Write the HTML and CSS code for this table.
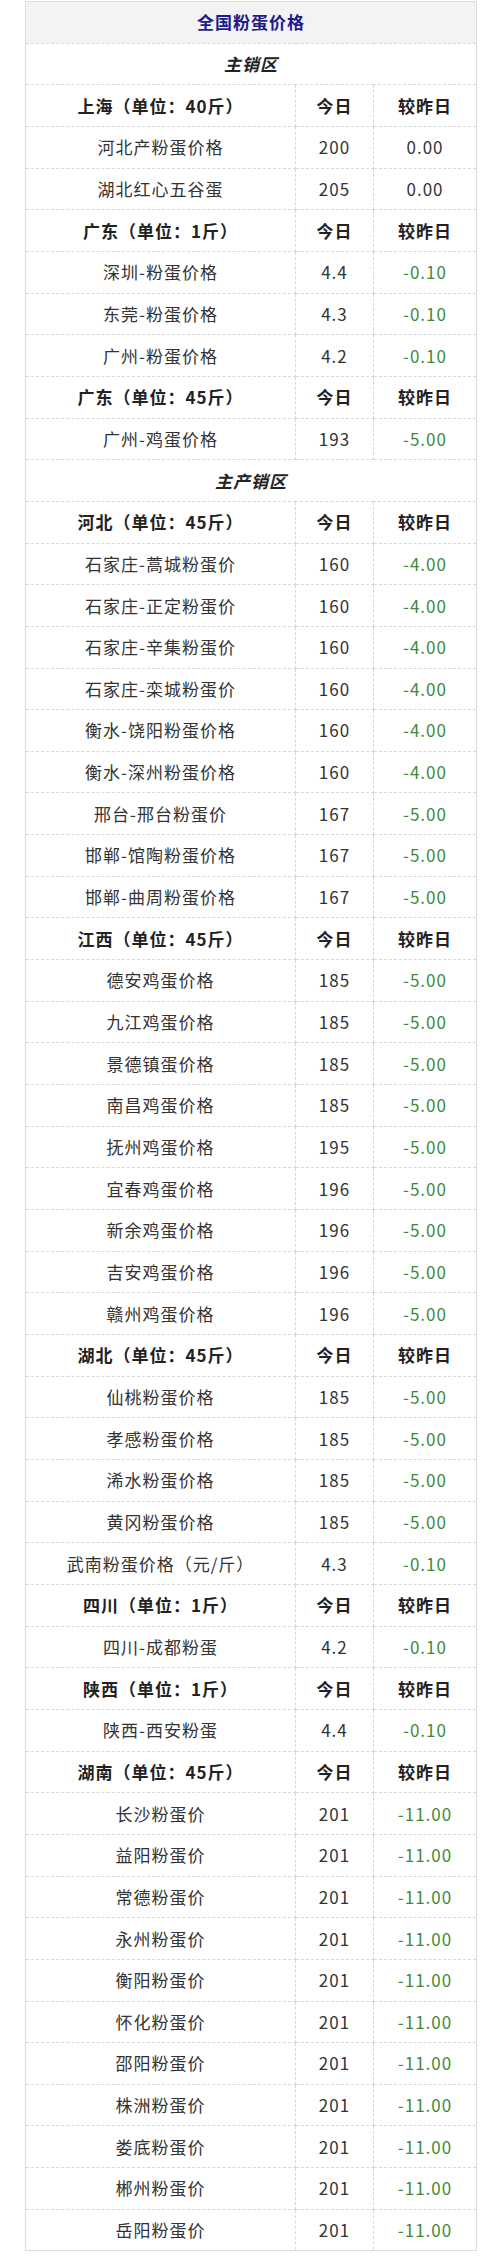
FILE: index.html
```html
<!DOCTYPE html>
<html lang="zh-CN">
<head>
<meta charset="utf-8">
<title>全国粉蛋价格</title>
<link rel="stylesheet" href="styles.css">
</head>
<body>
<table class="price-table">
  <colgroup>
    <col class="c-name">
    <col class="c-today">
    <col class="c-diff">
  </colgroup>
  <tbody>
    <tr class="title"><td colspan="3">全国粉蛋价格</td></tr>
    <tr class="zone"><td colspan="3">主销区</td></tr>
    <tr class="head"><td>上海（单位：40斤）</td><td>今日</td><td>较昨日</td></tr>
    <tr><td>河北产粉蛋价格</td><td>200</td><td>0.00</td></tr>
    <tr><td>湖北红心五谷蛋</td><td>205</td><td>0.00</td></tr>
    <tr class="head"><td>广东（单位：1斤）</td><td>今日</td><td>较昨日</td></tr>
    <tr><td>深圳-粉蛋价格</td><td>4.4</td><td class="down">-0.10</td></tr>
    <tr><td>东莞-粉蛋价格</td><td>4.3</td><td class="down">-0.10</td></tr>
    <tr><td>广州-粉蛋价格</td><td>4.2</td><td class="down">-0.10</td></tr>
    <tr class="head"><td>广东（单位：45斤）</td><td>今日</td><td>较昨日</td></tr>
    <tr><td>广州-鸡蛋价格</td><td>193</td><td class="down">-5.00</td></tr>
    <tr class="zone"><td colspan="3">主产销区</td></tr>
    <tr class="head"><td>河北（单位：45斤）</td><td>今日</td><td>较昨日</td></tr>
    <tr><td>石家庄-蒿城粉蛋价</td><td>160</td><td class="down">-4.00</td></tr>
    <tr><td>石家庄-正定粉蛋价</td><td>160</td><td class="down">-4.00</td></tr>
    <tr><td>石家庄-辛集粉蛋价</td><td>160</td><td class="down">-4.00</td></tr>
    <tr><td>石家庄-栾城粉蛋价</td><td>160</td><td class="down">-4.00</td></tr>
    <tr><td>衡水-饶阳粉蛋价格</td><td>160</td><td class="down">-4.00</td></tr>
    <tr><td>衡水-深州粉蛋价格</td><td>160</td><td class="down">-4.00</td></tr>
    <tr><td>邢台-邢台粉蛋价</td><td>167</td><td class="down">-5.00</td></tr>
    <tr><td>邯郸-馆陶粉蛋价格</td><td>167</td><td class="down">-5.00</td></tr>
    <tr><td>邯郸-曲周粉蛋价格</td><td>167</td><td class="down">-5.00</td></tr>
    <tr class="head"><td>江西（单位：45斤）</td><td>今日</td><td>较昨日</td></tr>
    <tr><td>德安鸡蛋价格</td><td>185</td><td class="down">-5.00</td></tr>
    <tr><td>九江鸡蛋价格</td><td>185</td><td class="down">-5.00</td></tr>
    <tr><td>景德镇蛋价格</td><td>185</td><td class="down">-5.00</td></tr>
    <tr><td>南昌鸡蛋价格</td><td>185</td><td class="down">-5.00</td></tr>
    <tr><td>抚州鸡蛋价格</td><td>195</td><td class="down">-5.00</td></tr>
    <tr><td>宜春鸡蛋价格</td><td>196</td><td class="down">-5.00</td></tr>
    <tr><td>新余鸡蛋价格</td><td>196</td><td class="down">-5.00</td></tr>
    <tr><td>吉安鸡蛋价格</td><td>196</td><td class="down">-5.00</td></tr>
    <tr><td>赣州鸡蛋价格</td><td>196</td><td class="down">-5.00</td></tr>
    <tr class="head"><td>湖北（单位：45斤）</td><td>今日</td><td>较昨日</td></tr>
    <tr><td>仙桃粉蛋价格</td><td>185</td><td class="down">-5.00</td></tr>
    <tr><td>孝感粉蛋价格</td><td>185</td><td class="down">-5.00</td></tr>
    <tr><td>浠水粉蛋价格</td><td>185</td><td class="down">-5.00</td></tr>
    <tr><td>黄冈粉蛋价格</td><td>185</td><td class="down">-5.00</td></tr>
    <tr><td>武南粉蛋价格（元/斤）</td><td>4.3</td><td class="down">-0.10</td></tr>
    <tr class="head"><td>四川（单位：1斤）</td><td>今日</td><td>较昨日</td></tr>
    <tr><td>四川-成都粉蛋</td><td>4.2</td><td class="down">-0.10</td></tr>
    <tr class="head"><td>陕西（单位：1斤）</td><td>今日</td><td>较昨日</td></tr>
    <tr><td>陕西-西安粉蛋</td><td>4.4</td><td class="down">-0.10</td></tr>
    <tr class="head"><td>湖南（单位：45斤）</td><td>今日</td><td>较昨日</td></tr>
    <tr><td>长沙粉蛋价</td><td>201</td><td class="down">-11.00</td></tr>
    <tr><td>益阳粉蛋价</td><td>201</td><td class="down">-11.00</td></tr>
    <tr><td>常德粉蛋价</td><td>201</td><td class="down">-11.00</td></tr>
    <tr><td>永州粉蛋价</td><td>201</td><td class="down">-11.00</td></tr>
    <tr><td>衡阳粉蛋价</td><td>201</td><td class="down">-11.00</td></tr>
    <tr><td>怀化粉蛋价</td><td>201</td><td class="down">-11.00</td></tr>
    <tr><td>邵阳粉蛋价</td><td>201</td><td class="down">-11.00</td></tr>
    <tr><td>株洲粉蛋价</td><td>201</td><td class="down">-11.00</td></tr>
    <tr><td>娄底粉蛋价</td><td>201</td><td class="down">-11.00</td></tr>
    <tr><td>郴州粉蛋价</td><td>201</td><td class="down">-11.00</td></tr>
    <tr><td>岳阳粉蛋价</td><td>201</td><td class="down">-11.00</td></tr>
  </tbody>
</table>
</body>
</html>
```

FILE: styles.css
```css
html, body {
  margin: 0;
  padding: 0;
  background: #ffffff;
}

body {
  padding-top: 1px;
  font-family: "Noto Sans CJK SC", "Noto Sans", sans-serif;
  color: #333333;
}

.price-table {
  width: 451px;
  margin: 0 0 0 25px;
  border-collapse: collapse;
  table-layout: fixed;
  border: 1px solid #dcdcdc;
}

.c-name { width: 270px; }
.c-today { width: 78px; }
.c-diff { width: 103px; }

.price-table td {
  height: 40.67px;
  padding: 0;
  text-align: center;
  vertical-align: middle;
  font-size: 17px;
  line-height: 20px;
  letter-spacing: 1px;
  border: 1px dashed #d8d8d8;
  white-space: nowrap;
}

.price-table .title td {
  background: #f3f3f3;
  color: #1c1c8c;
  font-weight: 700;
  border-top: 1px solid #dcdcdc;
}

.price-table .zone td {
  font-style: italic;
  font-weight: 700;
  color: #222222;
}

.price-table .head td {
  font-weight: 700;
  color: #222222;
}

.price-table td.down {
  color: #3f8a3a;
}
```
